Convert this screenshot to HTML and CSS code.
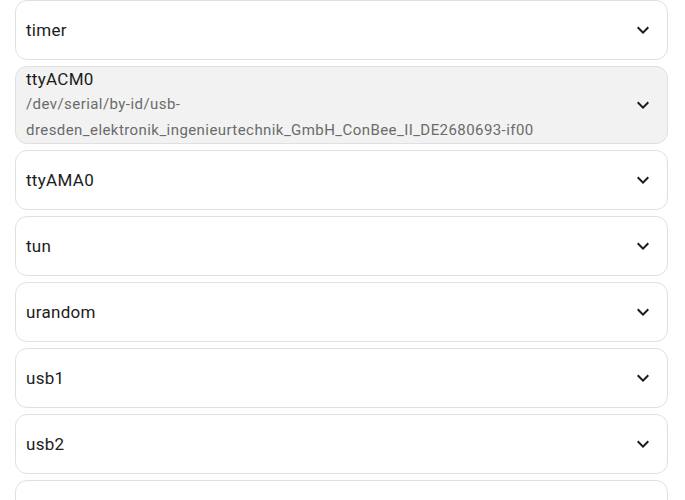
FILE: index.html
```html
<!DOCTYPE html>
<html>
<head>
<meta charset="utf-8">
<link rel="stylesheet" href="styles.css">
</head>
<body>
<div class="list">
  <div class="item"><div class="text"><div class="title">timer</div></div><svg class="chev" viewBox="0 0 24 24"><path d="M16.59 8.59L12 13.17 7.41 8.59 6 10l6 6 6-6z"/></svg></div>
  <div class="item hover"><div class="text"><div class="title">ttyACM0</div><div class="sub">/dev/serial/by-id/usb-dresden_elektronik_ingenieurtechnik_GmbH_ConBee_II_DE2680693-if00</div></div><svg class="chev" viewBox="0 0 24 24"><path d="M16.59 8.59L12 13.17 7.41 8.59 6 10l6 6 6-6z"/></svg></div>
  <div class="item"><div class="text"><div class="title">ttyAMA0</div></div><svg class="chev" viewBox="0 0 24 24"><path d="M16.59 8.59L12 13.17 7.41 8.59 6 10l6 6 6-6z"/></svg></div>
  <div class="item"><div class="text"><div class="title">tun</div></div><svg class="chev" viewBox="0 0 24 24"><path d="M16.59 8.59L12 13.17 7.41 8.59 6 10l6 6 6-6z"/></svg></div>
  <div class="item"><div class="text"><div class="title">urandom</div></div><svg class="chev" viewBox="0 0 24 24"><path d="M16.59 8.59L12 13.17 7.41 8.59 6 10l6 6 6-6z"/></svg></div>
  <div class="item"><div class="text"><div class="title">usb1</div></div><svg class="chev" viewBox="0 0 24 24"><path d="M16.59 8.59L12 13.17 7.41 8.59 6 10l6 6 6-6z"/></svg></div>
  <div class="item"><div class="text"><div class="title">usb2</div></div><svg class="chev" viewBox="0 0 24 24"><path d="M16.59 8.59L12 13.17 7.41 8.59 6 10l6 6 6-6z"/></svg></div>
  <div class="item"><div class="text"><div class="title">vcs</div></div><svg class="chev" viewBox="0 0 24 24"><path d="M16.59 8.59L12 13.17 7.41 8.59 6 10l6 6 6-6z"/></svg></div>
</div>
</body>
</html>
```
FILE: styles.css
```css
html, body {
  margin: 0;
  padding: 0;
  background: #ffffff;
  font-family: Roboto, "Liberation Sans", sans-serif;
}
body {
  height: 500px;
  overflow: hidden;
}
.list {
  display: flex;
  flex-direction: column;
  gap: 6px;
  padding: 0 17px 0 15px;
}
.item {
  display: flex;
  align-items: center;
  min-height: 58px;
  border: 1px solid #e0e0e0;
  border-radius: 12px;
  padding: 0 12px 0 10px;
  background: #ffffff;
}
.item.hover {
  background: #f2f2f2;
}
.text {
  flex: 1;
  min-width: 0;
  padding-right: 40px;
}
.title {
  font-size: 17px;
  line-height: 24px;
  letter-spacing: 0.3px;
  color: #1c1c1c;
}
.sub {
  font-size: 15px;
  line-height: 26px;
  letter-spacing: 0.43px;
  color: #6b6b6b;
}
.chev {
  width: 24px;
  height: 24px;
  flex: none;
  fill: #1c1c1c;
}
```
